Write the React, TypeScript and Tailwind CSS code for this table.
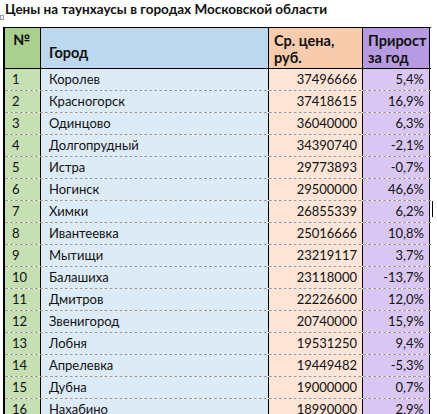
import React from "react";

const rows: [number, string, string, string][] = [
  [1, "Королев", "37496666", "5,4%"],
  [2, "Красногорск", "37418615", "16,9%"],
  [3, "Одинцово", "36040000", "6,3%"],
  [4, "Долгопрудный", "34390740", "-2,1%"],
  [5, "Истра", "29773893", "-0,7%"],
  [6, "Ногинск", "29500000", "46,6%"],
  [7, "Химки", "26855339", "6,2%"],
  [8, "Ивантеевка", "25016666", "10,8%"],
  [9, "Мытищи", "23219117", "3,7%"],
  [10, "Балашиха", "23118000", "-13,7%"],
  [11, "Дмитров", "22226600", "12,0%"],
  [12, "Звенигород", "20740000", "15,9%"],
  [13, "Лобня", "19531250", "9,4%"],
  [14, "Апрелевка", "19449482", "-5,3%"],
  [15, "Дубна", "19000000", "0,7%"],
  [16, "Нахабино", "18990000", "2,9%"],
];

export default function App() {
  return (
    <div
      className="relative w-[437px] h-[414px] overflow-hidden bg-white text-[#111]"
      style={{ fontFamily: "Lato, 'Noto Sans', sans-serif" }}
    >
      <div className="h-[27px] pl-[5px] pt-[2px] text-[13.5px] font-bold leading-[14px]">
        Цены на таунхаусы в городах Московской области
      </div>
      <div className="absolute left-0 top-[15px] w-[4px] h-[5px] border border-gray-400 bg-gray-100" />
      <div className="ml-[3px] w-[428px] border-l-2 border-t border-black text-[13px]">
        <div className="flex h-[41px] border-b border-black text-[14.5px] font-bold leading-[17px]">
          <div className="w-[36px] shrink-0 border-r border-black bg-[#a9d08e] pl-[8px] pt-[3px]">№</div>
          <div className="w-[228px] shrink-0 border-r border-black bg-[#bdd7ee] pl-[8px] pt-[16px]">Город</div>
          <div className="w-[94px] shrink-0 border-r border-black bg-[#f8cbad] pl-[5px] pt-[4px]">
            Ср. цена,
            <br />
            руб.
          </div>
          <div className="w-[67px] shrink-0 border-r border-black bg-[#b79be2] pl-[5px] pt-[4px]">
            Прирост
            <br />
            за год
          </div>
        </div>
        {rows.map(([n, city, price, growth]) => (
          <div key={n} className="flex h-[22px] border-b border-dashed border-[#9a9a9a] leading-[21px]">
            <div className="w-[36px] shrink-0 border-r border-black bg-[#c6e0b4] pl-[7px]">{n}</div>
            <div className="w-[228px] shrink-0 border-r border-black bg-[#ddebf7] pl-[8px]">{city}</div>
            <div className="w-[94px] shrink-0 border-r border-black bg-[#fce4d6] pr-[5px] text-right">{price}</div>
            <div className="w-[67px] shrink-0 border-r border-black bg-[#d9c6f2] pr-[5px] text-right">{growth}</div>
          </div>
        ))}
      </div>
      <div className="absolute left-[432px] top-[201px] w-px h-[16px] bg-black" />
    </div>
  );
}
